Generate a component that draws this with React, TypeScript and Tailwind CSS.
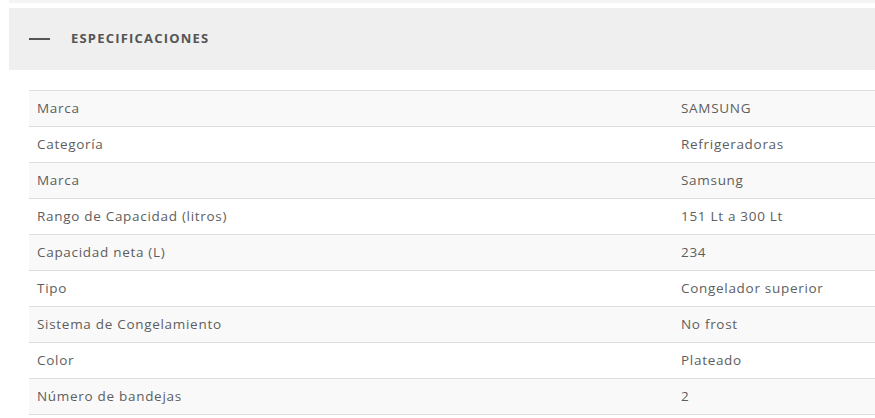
const specs: [string, string][] = [
  ["Marca", "SAMSUNG"],
  ["Categoría", "Refrigeradoras"],
  ["Marca", "Samsung"],
  ["Rango de Capacidad (litros)", "151 Lt a 300 Lt"],
  ["Capacidad neta (L)", "234"],
  ["Tipo", "Congelador superior"],
  ["Sistema de Congelamiento", "No frost"],
  ["Color", "Plateado"],
  ["Número de bandejas", "2"],
];

export default function App() {
  return (
    <div
      className="w-[875px] h-[418px] overflow-hidden bg-white text-[#555]"
      style={{ fontFamily: '"Open Sans", "DejaVu Sans", sans-serif' }}
    >
      <div className="ml-[9px] h-[3px] bg-[#f4f4f4]" />
      <div className="ml-[9px] mt-[5px] h-[62px] bg-[#efefef] flex items-center pl-[20px]">
        <span className="w-[21px] h-[2px] bg-[#555]" />
        <span className="ml-[21px] text-[13px] font-bold tracking-[1.2px] text-[#555]">
          ESPECIFICACIONES
        </span>
      </div>

      {/* tabla de especificaciones */}
      <div className="ml-[29px] mt-[20px] border-t border-[#ddd]">
        {specs.map(([label, value], i) => (
          <div
            key={i}
            className={`grid grid-cols-[644px_1fr] h-[36px] items-center border-b border-[#ddd] text-[13.5px] tracking-[0.7px] text-[#5e5e5e] ${
              i % 2 === 0 ? "bg-[#f9f9f9]" : "bg-white"
            }`}
          >
            <div className="pl-[8px]">{label}</div>
            <div className="pl-[8px]">{value}</div>
          </div>
        ))}
      </div>
    </div>
  );
}
